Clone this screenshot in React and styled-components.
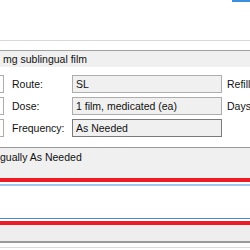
import React from "react";
import styled, { createGlobalStyle } from "styled-components";

const Global = createGlobalStyle`
  html, body {
    margin: 0;
    padding: 0;
    background: #ffffff;
    overflow: hidden;
  }
  body {
    font-family: "Liberation Sans", Arial, sans-serif;
    font-size: 10.5px;
    color: #111111;
  }
`;

const Page = styled.div`
  width: 250px;
  height: 250px;
  display: flex;
  flex-direction: column;
  overflow: hidden;
`;

const TopArea = styled.div`
  height: 40px;
  display: flex;
  justify-content: flex-end;
  border-bottom: 1px solid #d8d8d8;
`;

const FocusEdge = styled.div`
  width: 18px;
  height: 2px;
  background: #3b8fdc;
`;

const ReadOnlyLine = styled.div`
  margin-top: 9px;
  height: 16px;
  border-top: 1px solid #a0a0a0;
  background: #f0f0f0;
  padding-left: 3px;
  line-height: 16px;
  white-space: nowrap;
`;

const Fields = styled.div`
  margin-top: 8px;
  display: grid;
  grid-template-columns: 4px 68px 150px 1fr;
  grid-template-rows: 18px 18px 18px;
  row-gap: 4px;
  align-items: center;
`;

const CutBox = styled.div`
  height: 18px;
  box-sizing: border-box;
  border: 1px solid #adadad;
  border-left: none;
  background: #ffffff;
`;

const Label = styled.div`
  padding-left: ${p => p.$pad || 8}px;
  white-space: nowrap;
  line-height: 18px;
`;

const Input = styled.div`
  height: 18px;
  box-sizing: border-box;
  border: 1px solid ${p => (p.$dark ? "#7a7a7a" : "#adadad")};
  background: #f0f0f0;
  padding-left: 3px;
  line-height: 16px;
  white-space: nowrap;
  overflow: hidden;
`;

const SigBox = styled.div`
  margin-top: 10px;
  height: 30px;
  border-top: 1px solid #9a9a9a;
  background: #f0f0f0;
  line-height: 18px;
  white-space: nowrap;
`;

const Stripe = styled.div`
  height: ${p => p.$h}px;
  background: ${p => p.$c || "#ffffff"};
`;

const fields = [
  { label: "Route:", value: "SL", side: "Refill" },
  { label: "Dose:", value: "1 film, medicated (ea)", side: "Days" },
  { label: "Frequency:", value: "As Needed", side: "", dark: true },
];

export default function App() {
  return (
    <Page>
      <Global />
      <TopArea>
        <FocusEdge />
      </TopArea>
      <ReadOnlyLine>mg sublingual film</ReadOnlyLine>
      <Fields>
        {fields.map(f => (
          <React.Fragment key={f.label}>
            <CutBox />
            <Label>{f.label}</Label>
            <Input $dark={f.dark}>{f.value}</Input>
            <Label $pad={5}>{f.side}</Label>
          </React.Fragment>
        ))}
      </Fields>
      <SigBox>gually As Needed</SigBox>
      <Stripe $h={4} $c="#ed1c24" />
      <Stripe $h={2} />
      <Stripe $h={2} $c="#9dcbf0" />
      <Stripe $h={32} />
      <Stripe $h={1} $c="#3b8fdc" />
      <Stripe $h={2} />
      <Stripe $h={4} $c="#ed1c24" />
      <Stripe $h={16} $c="#eeeeee" />
      <Stripe $h={2} $c="#9a9a9a" />
      <Stripe $h={4} />
      <Stripe $h={1} $c="#dcdcdc" />
    </Page>
  );
}
